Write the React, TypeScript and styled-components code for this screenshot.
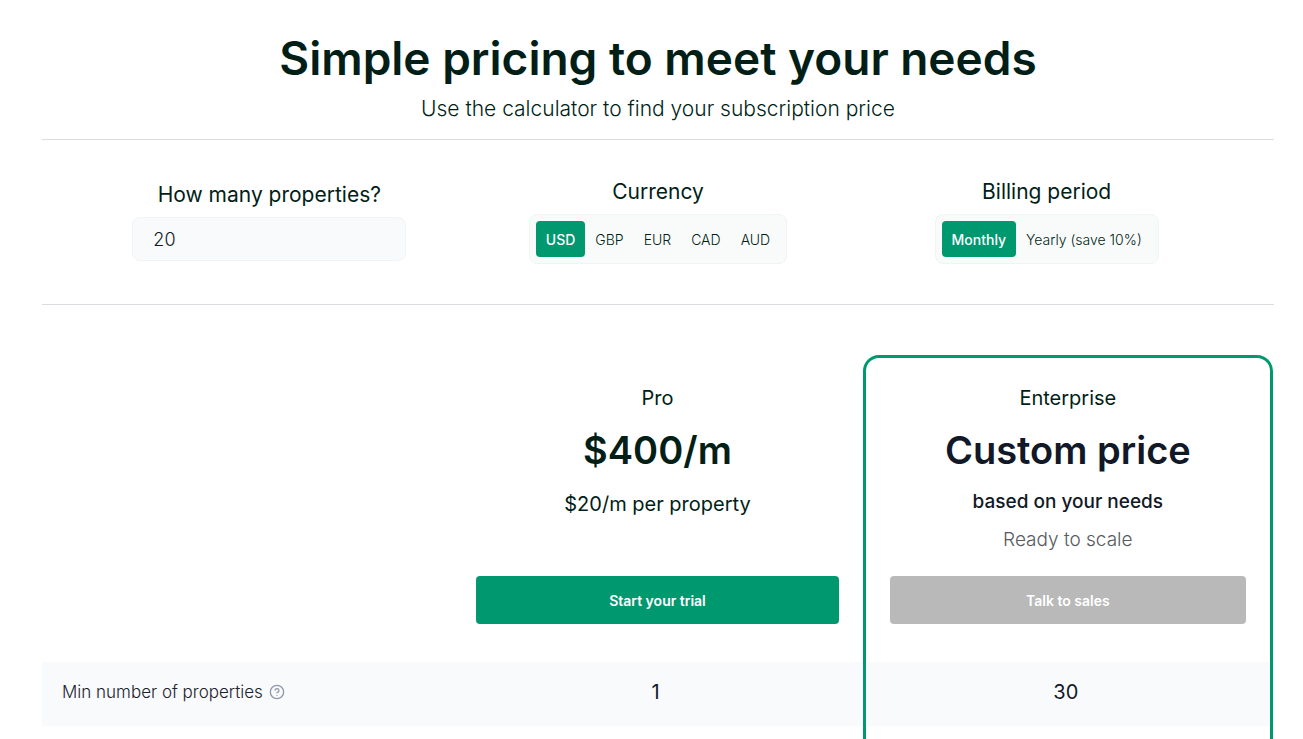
import React, { useState } from "react";
import styled, { createGlobalStyle } from "styled-components";
import { CircleHelp } from "lucide-react";

const GlobalStyle = createGlobalStyle`
  *, *::before, *::after { box-sizing: border-box; }
  body {
    margin: 0;
    background: #ffffff;
    color: #011e17;
    font-family: Inter, "Liberation Sans", sans-serif;
  }
  button, input { font-family: inherit; }
`;

const Page = styled.main`
  min-height: 100vh;
  padding: 30px 29px 0 42px;
`;

const Header = styled.header`
  padding-bottom: 14px;
  border-bottom: 1px solid #dcdcdc;
  text-align: center;
`;

const Title = styled.h1`
  margin: 0;
  font-size: 46px;
  line-height: 56px;
  font-weight: 600;
`;

const Subtitle = styled.p`
  margin: 7px 0 0;
  font-size: 21px;
  line-height: 32px;
  font-weight: 300;
`;

const Controls = styled.section`
  display: grid;
  grid-template-columns: repeat(3, 1fr);
  align-items: center;
  justify-items: center;
  padding: 38px 33px 40px;
  border-bottom: 1px solid #d9dbe1;
`;

const Field = styled.div`
  display: flex;
  flex-direction: column;
  align-items: center;
  gap: 8px;
  max-width: 100%;
`;

const FieldGroup = styled(Field).attrs({ as: "fieldset" })`
  margin: 0;
  padding: 0;
  border: 0;
`;

const FieldTitle = styled.span`
  font-size: 21px;
  line-height: 28px;
  font-weight: 400;
`;

const CountInput = styled.input`
  width: 274px;
  max-width: 100%;
  height: 44px;
  padding: 0 20px;
  border: 1px solid #f1f3f5;
  border-radius: 8px;
  background: #f9fafc;
  color: #111827;
  font-size: 18px;
  font-weight: 300;
  outline: none;
`;

const Segments = styled.div`
  display: flex;
  padding: 6px;
  border: 1px solid #f1f4f4;
  border-radius: 8px;
  background: #f9fbfa;
`;

const Segment = styled.button<{ $active: boolean }>`
  height: 36px;
  padding: 0 10px;
  border: 0;
  border-radius: 4px;
  background: ${(p) => (p.$active ? "#00986f" : "transparent")};
  color: ${(p) => (p.$active ? "#ffffff" : "#011e17")};
  font-size: 14px;
  font-weight: ${(p) => (p.$active ? 500 : 300)};
  cursor: pointer;
`;

const Plans = styled.table`
  width: calc(100% - 1px);
  margin-top: 50px;
  border-collapse: separate;
  border-spacing: 0;
  table-layout: fixed;
`;

const PlanHead = styled.th<{ $featured?: boolean }>`
  padding: ${(p) => (p.$featured ? "26px 24px 38px" : "29px 24px 38px")};
  border: ${(p) => (p.$featured ? "3px solid #00986f" : "0")};
  border-bottom: 0;
  border-radius: ${(p) => (p.$featured ? "16px 16px 0 0" : "0")};
  font-weight: 400;
  vertical-align: top;
`;

const PlanBody = styled.div`
  display: flex;
  flex-direction: column;
  align-items: center;
  height: 192px;
`;

const PlanName = styled.span`
  font-size: 20px;
  line-height: 28px;
`;

const Price = styled.span<{ $dark?: boolean }>`
  margin-top: 10px;
  color: ${(p) => (p.$dark ? "#111827" : "#011e17")};
  font-size: 38px;
  line-height: 56px;
  font-weight: 600;
`;

const PriceNote = styled.span<{ $strong?: boolean }>`
  margin-top: ${(p) => (p.$strong ? "10px" : "12px")};
  color: ${(p) => (p.$strong ? "#111827" : "#011e17")};
  font-size: ${(p) => (p.$strong ? "19px" : "20px")};
  line-height: 28px;
  font-weight: ${(p) => (p.$strong ? 500 : 400)};
`;

const Tagline = styled.span`
  margin-top: 10px;
  color: #555b5e;
  font-size: 19px;
  line-height: 28px;
  font-weight: 300;
`;

const PlanButton = styled.button<{ $muted?: boolean }>`
  display: block;
  width: 100%;
  height: 48px;
  border: 0;
  border-radius: 4px;
  background: ${(p) => (p.$muted ? "#b9b9b9" : "#00986f")};
  color: #ffffff;
  font-size: 14px;
  font-weight: 600;
  cursor: pointer;
`;

const FeatureRow = styled.tr`
  background: #f9fafc;
`;

const FeatureName = styled.th`
  height: 64px;
  padding: 0 20px 4px;
  color: #1b222c;
  font-size: 17px;
  font-weight: 300;
  text-align: left;
`;

const FeatureLabel = styled.span`
  display: flex;
  align-items: center;
  gap: 6px;
`;

const HelpIcon = styled(CircleHelp)`
  color: #8f99ab;
`;

const Value = styled.td<{ $featured?: boolean }>`
  padding: 0 4px 4px 0;
  border: 0 solid #00986f;
  border-width: ${(p) => (p.$featured ? "0 3px" : "0")};
  color: #111827;
  font-size: 20px;
  text-align: center;
`;

const TailCell = styled(Value)`
  height: 13px;
`;

const CURRENCIES = ["USD", "GBP", "EUR", "CAD", "AUD"];
const PERIODS = ["Monthly", "Yearly (save 10%)"];

interface PickerProps {
  title: string;
  options: string[];
  value: string;
  onChange: (value: string) => void;
}

function Picker({ title, options, value, onChange }: PickerProps) {
  const id = title.toLowerCase().replace(" ", "-");
  return (
    <FieldGroup aria-labelledby={id}>
      <FieldTitle id={id}>{title}</FieldTitle>
      <Segments>
        {options.map((option) => (
          <Segment
            key={option}
            type="button"
            $active={option === value}
            aria-pressed={option === value}
            onClick={() => onChange(option)}
          >
            {option}
          </Segment>
        ))}
      </Segments>
    </FieldGroup>
  );
}

export default function App() {
  const [count, setCount] = useState("20");
  const [currency, setCurrency] = useState("USD");
  const [period, setPeriod] = useState("Monthly");

  return (
    <>
      <GlobalStyle />
      <Page>
        <Header>
          <Title>Simple pricing to meet your needs</Title>
          <Subtitle>Use the calculator to find your subscription price</Subtitle>
        </Header>

        <Controls>
          <Field>
            <FieldTitle as="label" htmlFor="count">
              How many properties?
            </FieldTitle>
            <CountInput
              id="count"
              inputMode="numeric"
              value={count}
              onChange={(e) => setCount(e.target.value)}
            />
          </Field>
          <Picker title="Currency" options={CURRENCIES} value={currency} onChange={setCurrency} />
          <Picker title="Billing period" options={PERIODS} value={period} onChange={setPeriod} />
        </Controls>

        <Plans>
          <thead>
            <tr>
              <td />
              <PlanHead scope="col">
                <PlanBody>
                  <PlanName>Pro</PlanName>
                  <Price>$400/m</Price>
                  <PriceNote>$20/m per property</PriceNote>
                </PlanBody>
                <PlanButton type="button">Start your trial</PlanButton>
              </PlanHead>
              <PlanHead scope="col" $featured>
                <PlanBody>
                  <PlanName>Enterprise</PlanName>
                  <Price $dark>Custom price</Price>
                  <PriceNote $strong>based on your needs</PriceNote>
                  <Tagline>Ready to scale</Tagline>
                </PlanBody>
                <PlanButton type="button" $muted>
                  Talk to sales
                </PlanButton>
              </PlanHead>
            </tr>
          </thead>
          <tbody>
            <FeatureRow>
              <FeatureName scope="row">
                <FeatureLabel>
                  Min number of properties
                  <HelpIcon size={16} strokeWidth={2} aria-hidden />
                </FeatureLabel>
              </FeatureName>
              <Value>1</Value>
              <Value $featured>30</Value>
            </FeatureRow>
            <tr>
              <TailCell />
              <TailCell />
              <TailCell $featured />
            </tr>
          </tbody>
        </Plans>
      </Page>
    </>
  );
}
